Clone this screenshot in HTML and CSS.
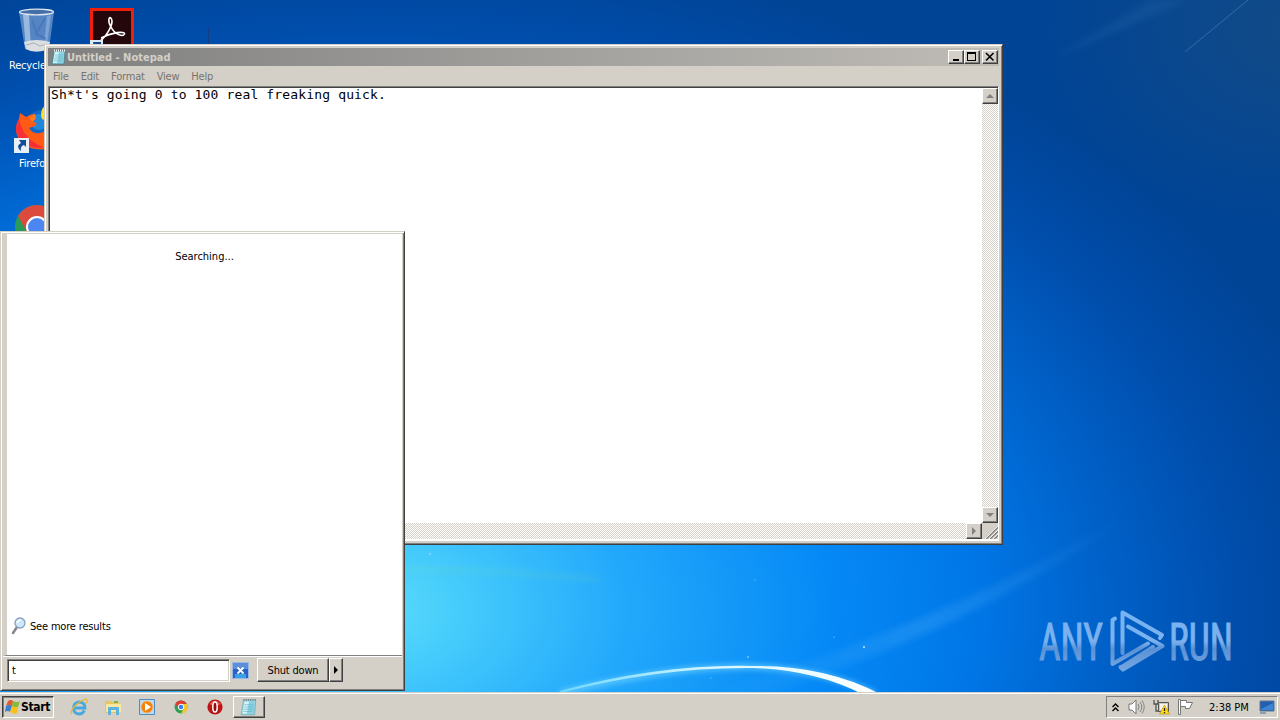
FILE: index.html
```html
<!DOCTYPE html>
<html lang="en">
<head>
    <meta charset="UTF-8">
    <meta name="viewport" content="width=device-width, initial-scale=1.0">
    <title>Desktop</title>
    <link rel="stylesheet" href="styles.css">
</head>
<body>
    <div class="desktop">
        <svg class="wallpaper" width="1280" height="692" viewBox="0 0 1280 692">
            <defs>
                <linearGradient id="beam" x1="0" y1="1" x2="1" y2="0">
                    <stop offset="0" stop-color="#6cc4ff" stop-opacity="0"/>
                    <stop offset=".45" stop-color="#6cc4ff" stop-opacity=".2"/>
                    <stop offset="1" stop-color="#6cc4ff" stop-opacity="0"/>
                </linearGradient>
                <linearGradient id="arc" x1="0" x2="1" y1="0" y2="0">
                    <stop offset="0" stop-color="#6fd8ff"/>
                    <stop offset=".5" stop-color="#d8f6ff"/>
                    <stop offset="1" stop-color="#fff"/>
                </linearGradient>
                <filter id="soft" x="-20%" y="-20%" width="140%" height="140%"><feGaussianBlur stdDeviation="3"/></filter>
                <filter id="glow" x="-20%" y="-50%" width="140%" height="200%"><feGaussianBlur stdDeviation="2.5"/></filter>
                <filter id="fine" x="-20%" y="-50%" width="140%" height="200%"><feGaussianBlur stdDeviation=".5"/></filter>
            </defs>
            <path d="M690 698 Q910 640 1140 508 Q960 640 740 700z" fill="url(#beam)" filter="url(#soft)"/>
            <path d="M1050 60 L1150 0 L1190 0z" fill="#4a90c8" opacity=".12" filter="url(#soft)"/>
            <path d="M1185 52 L1248 0" stroke="#7faed0" opacity=".35" filter="url(#fine)"/>
            <path d="M405 568 Q500 570 600 580" fill="none" stroke="#7be0a0" stroke-width="4" opacity=".2" filter="url(#soft)"/>
            <path d="M560 693 Q690 661 775 668 Q835 674 875 694" fill="none" stroke="#6fd0ff" stroke-width="7" opacity=".6" filter="url(#glow)"/>
            <path d="M560 693 Q660 667 752 668 Q815 670 862 694 L880 694 Q825 665 752 666 Q660 664 560 691z" fill="url(#arc)" filter="url(#fine)"/>
            <g fill="#b8ecff">
                <circle cx="430" cy="554" r=".8"/><circle cx="748" cy="657" r=".8"/><circle cx="864" cy="647" r="1"/>
                <circle cx="834" cy="637" r=".5"/><circle cx="755" cy="580" r=".5"/><circle cx="711" cy="678" r=".5"/>
            </g>
            <path d="M208.500 28 V44" stroke="#153c80"/>
        </svg>

        <div class="icon recycle">
            <svg width="40" height="50" viewBox="0 0 40 50">
                <path d="M2 6 L37 6 L32 43 Q19 49 8 43z" fill="#7399d0" opacity=".75"/>
                <path d="M6 9 L12 9 L14 43 L9 42z" fill="#d4e4f4" opacity=".55"/>
                <path d="M30 10 L34 9 L30 38 L27 38z" fill="#9dc2ea" opacity=".5"/>
                <path d="M15 14 L20 28 M28 12 L19 28 L29 33" stroke="#3a66ae" stroke-width="2" fill="none" opacity=".45"/>
                <path d="M7 36 Q19 32 33 36 L31 43 Q19 48 9 43z" fill="#dcdfe0"/>
                <path d="M9 39 L17 37 L23 40 L30 38" stroke="#a8b0b8" fill="none"/>
                <ellipse cx="19.500" cy="6" rx="17" ry="2.800" fill="#456fa8" stroke="#dce6ee" stroke-width="1.300"/>
            </svg>
            <span>Recycle Bin</span>
        </div>
        <div class="icon acrobat">
            <svg width="44" height="44" viewBox="0 0 44 44">
                <path d="M0 0H44V44H0z" fill="#f0200c"/>
                <path d="M3 3H41V44H3z" fill="#24070b"/>
                <path d="M10 33 C16 29 24 16 21.500 11 C19.500 7 17 12 21 19 C25 27 33 29 34.500 26 C35 23 22 24 11 30" fill="none" stroke="#fff" stroke-width="1.600"/>
                <path d="M-1 32H13V44H-1z" fill="#dce8f4"/>
                <path d="M3 34H11V40L8 37 4 41z" fill="#1c4a90"/>
            </svg>
        </div>
        <div class="icon firefox">
            <svg width="44" height="48" viewBox="0 0 44 48">
                <circle cx="27" cy="22" r="17" fill="#1268c8"/>
                <circle cx="24" cy="17" r="8" fill="#2088dc"/>
                <path d="M30 0 Q24 7 27 14 L44 22 V0z" fill="#f8e020"/>
                <path d="M5 8 L11 12 Q15 9 20 9 L21 13 L18 17 Q24 17 20 21 L14 23 Q19 31 28 27 L44 20 V43 Q5 50 1 26 Q1 18 4 14z" fill="#ff5a16"/>
                <path d="M4 14 Q7 30 20 38 L29 43 Q6 44 1 26 Q1 18 4 14z" fill="#f92f38"/>
                <path d="M14 12 L20 9 L21 13 L17 17z" fill="#ff7a20"/>
            </svg>
            <svg class="shortcut" width="15" height="15" viewBox="0 0 15 15">
                <path d="M0 0H15V15H0z" fill="#e8eff6"/>
                <path d="M5 2H12V9L10 7Q6 8 7 13Q1 8 7 5z" fill="#144c96"/>
            </svg>
            <span>Firefox</span>
        </div>
        <div class="icon chrome">
            <svg width="44" height="44" viewBox="0 0 44 44">
                <circle cx="22" cy="22" r="22" fill="#2a9a58"/>
                <path d="M3 11 A22 22 0 0 1 41 11 L22 22 L12 27z" fill="#dc4a3e"/>
                <circle cx="22" cy="22" r="10" fill="#4c86f0" stroke="#fff" stroke-width="2"/>
            </svg>
        </div>

        <svg class="watermark" width="210" height="66" viewBox="0 0 210 66">
            <defs>
                <linearGradient id="mark" x1="0" y1="0" x2="0" y2="66" gradientUnits="userSpaceOnUse">
                    <stop offset=".1" stop-color="#77b2f2"/>
                    <stop offset=".5" stop-color="#7cb2ee"/>
                    <stop offset=".62" stop-color="#5b92d6"/>
                    <stop offset="1" stop-color="#78a9e4"/>
                </linearGradient>
            </defs>
            <text x="3" y="52" textLength="64" lengthAdjust="spacingAndGlyphs">ANY</text>
            <text x="133" y="52" textLength="64" lengthAdjust="spacingAndGlyphs">RUN</text>
            <g fill="none" stroke="url(#mark)" stroke-width="4" stroke-linejoin="round" stroke-linecap="round">
                <path d="M79 10.500 L76.500 12 V56 L112 35.500"/>
                <path d="M86.500 45 V4.500 L126 27 L124 30"/>
                <path d="M92 18.500 L126.500 38 L87 61.500 L84.500 59"/>
                <path d="M85 59.500 L117 39"/>
            </g>
        </svg>

        <div class="window notepad">
            <div class="titlebar">
                <svg width="16" height="16" viewBox="0 0 16 16">
                    <path d="M3 2H14L13 15H1z" fill="#8cd3e2" stroke="#407c8c" stroke-width=".7"/>
                    <path d="M4 3H8L6 14H2z" fill="#d2f3f8"/>
                    <path d="M4 6H12M4 8H12M3 10H12M3 12H11" stroke="#63b1c5" stroke-width=".6"/>
                    <path d="M3 1.500H14" stroke="#f5f5f5" stroke-width="2" stroke-dasharray="1 1"/>
                </svg>
                <span class="title">Untitled - Notepad</span>
                <button class="btn"><svg width="12" height="10" viewBox="0 0 12 10"><path d="M3 7H9V9H3z"/></svg></button>
                <button class="btn"><svg width="12" height="10" viewBox="0 0 12 10"><path d="M1 0H10V9H1zM2 2V8H9V2z" fill-rule="evenodd"/></svg></button>
                <button class="btn close"><svg width="12" height="10" viewBox="0 0 12 10"><path d="M2 1L9.500 8.500M9.500 1L2 8.500" stroke="#000" stroke-width="1.600"/></svg></button>
            </div>
            <div class="menubar">
                <span>File</span><span>Edit</span><span>Format</span><span>View</span><span>Help</span>
            </div>
            <div class="editor">
                <div class="text">Sh*t's going 0 to 100 real freaking quick.</div>
                <div class="scroll vertical">
                    <button class="btn"><svg width="8" height="6" viewBox="0 0 8 6"><path d="M0 5L4 1 8 5z"/></svg></button>
                    <button class="btn"><svg width="8" height="6" viewBox="0 0 8 6"><path d="M0 1L4 5 8 1z"/></svg></button>
                </div>
                <div class="scroll horizontal">
                    <button class="btn"><svg width="6" height="8" viewBox="0 0 6 8"><path d="M1 0L5 4 1 8z"/></svg></button>
                </div>
                <div class="grip">
                    <svg width="17" height="17" viewBox="0 0 17 17">
                        <path d="M4 16L16 4M8 16L16 8M12 16L16 12" stroke="#808080" stroke-width="1.600"/>
                        <path d="M3 16L16 3M7 16L16 7M11 16L16 11" stroke="#fff" stroke-width=".8"/>
                    </svg>
                </div>
            </div>
        </div>

        <div class="startmenu">
            <div class="results">
                <div class="searching">Searching...</div>
                <div class="more">
                    <svg width="16" height="18" viewBox="0 0 16 18">
                        <path d="M6 10L2 16" stroke="#85858c" stroke-width="2.500" stroke-linecap="round"/>
                        <circle cx="9" cy="6" r="5" fill="#cde7fb" stroke="#8a9fba" stroke-width="1.300"/>
                        <path d="M6 6Q7 3 10 3" stroke="#fff" fill="none" stroke-width="1.500"/>
                    </svg>
                    <span>See more results</span>
                </div>
            </div>
            <div class="searchrow">
                <div class="searchbox">t</div>
                <svg class="clear" width="17" height="17" viewBox="0 0 17 17">
                    <path d="M.5.5H16.500V16.500H.5z" fill="#2a62c4" stroke="#9ab8e4"/>
                    <path d="M1 1H16V7H1z" fill="#5c8edc"/>
                    <path d="M3 12H14V16H3z" fill="#38a0e4"/>
                    <path d="M5.500 5.500L11.500 11.500M11.500 5.500L5.500 11.500" stroke="#fff" stroke-width="1.800"/>
                </svg>
                <button class="btn shutdown">Shut down</button>
                <button class="btn arrow"><svg width="5" height="8" viewBox="0 0 5 8"><path d="M0 0L4 4 0 8z"/></svg></button>
            </div>
        </div>
    </div>

    <div class="taskbar">
        <div class="start">
            <svg width="16" height="16" viewBox="0 0 16 16">
                <path d="M3 2Q6 0 8 2L7 7Q4 5 1 7z" fill="#e85826"/>
                <path d="M8 2Q12 4 15 2L13 8Q11 9 7 7z" fill="#84bc38"/>
                <path d="M1 7Q4 5 7 7L5 13Q3 11 0 13z" fill="#3a80d0"/>
                <path d="M7 7Q10 9 13 8L12 14Q9 16 5 13z" fill="#f8c018"/>
            </svg>
            <span>Start</span>
        </div>
        <div class="quick">
            <svg viewBox="0 0 18 18">
                <path d="M14.500 12.500Q12.500 16 9 16Q3.500 15.500 3.500 10Q4 4.500 9.500 4Q15 4.500 15 10H5" fill="none" stroke="#45a9df" stroke-width="2.800"/>
                <path d="M2 16Q-1 14 6 7Q15-1 17 2Q18 4 15 6" fill="none" stroke="#e7b738" stroke-width="1.300"/>
            </svg>
            <svg viewBox="0 0 18 18">
                <path d="M1 3H7L8 4H15V15H1z" fill="#e9c65f"/>
                <path d="M2 6H17V14H2z" fill="#f8e7a0"/>
                <path d="M4 17V10Q4 9 5 9H14Q15 9 15 10V17H12V12H7V17z" fill="#5cb3df"/>
                <path d="M10 3H14V5H10z" fill="#73b852"/>
            </svg>
            <svg viewBox="0 0 18 18">
                <path d="M1.500 1.500H16.500V16.500H1.500z" fill="#b8daf5" stroke="#4e8ac4"/>
                <circle cx="9" cy="9" r="6" fill="#f3820c" stroke="#ffc171" stroke-width=".7"/>
                <path d="M7 5L13 9 7 13z" fill="#fff"/>
            </svg>
            <svg viewBox="0 0 18 18">
                <circle cx="9" cy="9" r="6.500" fill="#30a154"/>
                <path d="M3.400 5.700A6.500 6.500 0 0 1 14.600 5.700L9 9 6 11z" fill="#df3c30"/>
                <path d="M9 6H14.800A6.500 6.500 0 0 1 9 15.500L12 10z" fill="#f6ca25"/>
                <circle cx="9" cy="9" r="2.800" fill="#3d7ded" stroke="#fff" stroke-width="1"/>
            </svg>
            <svg viewBox="0 0 18 18">
                <circle cx="9" cy="9" r="7.600" fill="#bc1415"/>
                <path d="M3 6Q9-1 15 6Q9 9 3 6z" fill="#e3554b"/>
                <ellipse cx="9" cy="9" rx="2.200" ry="5" fill="#99090c" stroke="#fff" stroke-width="1.500"/>
            </svg>
        </div>
        <button class="btn task">
            <svg width="18" height="18" viewBox="0 0 16 16">
                <path d="M3 2H14L13 15H1z" fill="#8cd3e2" stroke="#719aa4" stroke-width=".5"/>
                <path d="M4 3H8L6 14H2z" fill="#d2f3f8"/>
                <path d="M4 6H12M4 8H12M3 10H12M3 12H11" stroke="#63b1c5" stroke-width=".6"/>
                <path d="M3 1.500H14" stroke="#4d5a5c" stroke-dasharray="1 1"/>
            </svg>
        </button>
        <div class="tray">
            <svg class="chev" width="7" height="9" viewBox="0 0 7 9"><path d="M.5 4L3.500 1 6.500 4M.5 8L3.500 5 6.500 8" fill="none" stroke="#000" stroke-width="1.400"/></svg>
            <svg class="speaker" width="18" height="16" viewBox="0 0 18 16">
                <path d="M1 5H4L8 1V15L4 11H1z" fill="#fff" stroke="#777"/>
                <path d="M10 5Q12 8 10 11M12 3Q15.500 8 12 13M14 1.500Q18.500 8 14 14.500" fill="none" stroke="#858585"/>
            </svg>
            <svg class="network" width="17" height="16" viewBox="0 0 17 16">
                <path d="M5.500 3.500H15.500V12.500H5.500z" fill="#c8c8c0" stroke="#555"/>
                <path d="M7 5H14V11H7z" fill="#f4f4ec"/>
                <path d="M1 1V5H5V1M3 5V12H6" fill="none" stroke="#555" stroke-width="1.300"/>
                <path d="M11.500 6L16.500 15H6.500z" fill="#ffdb18" stroke="#bd8c00" stroke-width=".6"/>
                <path d="M11.500 9V12M11.500 13V14.300" stroke="#222" stroke-width="1.300"/>
            </svg>
            <svg class="flag" width="17" height="16" viewBox="0 0 17 16">
                <path d="M1.500.5H3.500V15.500H1.500z" fill="#fff" stroke="#777"/>
                <path d="M3.500 1.500H9.500V3.500H15.500L12.500 9.500H8.500V7.500H3.500z" fill="#fff" stroke="#777"/>
            </svg>
            <span class="clock">2:38 PM</span>
            <svg width="16" height="16" viewBox="0 0 16 16">
                <path d="M1 2H15V12H1z" fill="#235eb0" stroke="#5f7894"/>
                <path d="M2 10L14 4V11H2z" fill="#3b83d3"/>
                <path d="M1 14H7" stroke="#486c98"/>
            </svg>
        </div>
    </div>
</body>
</html>
```
FILE: styles.css
```css
* {
    box-sizing: border-box;
}
body {
    margin: 0;
    width: 1280px;
    height: 720px;
    overflow: hidden;
    display: flex;
    flex-direction: column;
    font-family: Tahoma, 'DejaVu Sans Condensed', 'DejaVu Sans', sans-serif;
    font-stretch: condensed;
    font-size: 11px;
    letter-spacing: -0.18px;
    color: #000;
}
svg {
    display: block;
    flex: none;
}
.desktop {
    position: relative;
    height: 692px;
    overflow: hidden;
    background:
        radial-gradient(ellipse 260px 200px at 1290px 30px, rgba(35, 80, 120, 0.5), transparent),
        radial-gradient(ellipse 1000px 667px at 370px 610px, #5cdcfc 0%, #48cefb 8%, #22a8fb 26%, #0589f6 46%, #0076e6 61%, #0062ca 73%, #004dab 87%, #004496 100%);
}
.wallpaper {
    position: absolute;
    left: 0;
    top: 0;
}

/* desktop icons */
.icon {
    position: absolute;
    color: #fff;
    white-space: nowrap;
}
.icon span {
    display: block;
}
.recycle {
    left: 17px;
    top: 6px;
}
.recycle span {
    margin: 3px 0 0 -8px;
}
.acrobat {
    left: 90px;
    top: 8px;
}
.firefox {
    left: 15px;
    top: 105px;
}
.firefox span {
    margin: 4px 0 0 4px;
}
.shortcut {
    position: absolute;
    left: -1px;
    top: 33px;
}
.chrome {
    left: 15px;
    top: 205px;
}
.watermark {
    position: absolute;
    left: 1036px;
    top: 608px;
    overflow: visible;
}
.watermark text {
    font-family: Roboto, sans-serif;
    font-size: 52px;
    letter-spacing: 0;
    fill: url(#mark);
    stroke: url(#mark);
    stroke-width: 1;
}

/* classic raised button */
.btn {
    display: flex;
    align-items: center;
    justify-content: center;
    padding: 0;
    background: #d4d0c8;
    border: 1px solid;
    border-color: #fff #404040 #404040 #fff;
    box-shadow: inset -1px -1px #808080;
    font: inherit;
    letter-spacing: inherit;
    color: #000;
}
.window {
    position: absolute;
    background: #d4d0c8;
    border: 1px solid;
    border-color: #d4d0c8 #404040 #404040 #d4d0c8;
    box-shadow: inset 1px 1px #fff, inset -1px -1px #808080;
    padding: 3px;
}
.notepad {
    left: 44px;
    top: 44px;
    width: 959px;
    height: 501px;
    display: flex;
    flex-direction: column;
}
.titlebar {
    display: flex;
    align-items: center;
    height: 18px;
    padding: 0 1px 0 3px;
    background: linear-gradient(90deg, #808080, #bfbcb6);
}
.title {
    flex: 1;
    color: #d4d0c8;
    font-weight: bold;
    letter-spacing: 0;
}
.titlebar .btn {
    width: 16px;
    height: 14px;
}
.titlebar .close {
    margin-left: 2px;
}
.menubar {
    display: flex;
    align-items: center;
    gap: 12px;
    height: 20px;
    padding-left: 5px;
    color: #77746f;
    letter-spacing: -0.2px;
}
.editor {
    flex: 1;
    display: grid;
    grid-template-columns: 1fr 16px;
    grid-template-rows: 1fr 16px;
    background: #fff;
    border: 1px solid;
    border-color: #808080 #fff #fff #808080;
    box-shadow: inset 1px 1px #404040;
    padding: 1px 0 1px 1px;
}
.text {
    padding-left: 1px;
    font-family: 'Lucida Console', 'DejaVu Sans Mono', monospace;
    font-stretch: normal;
    font-size: 13px;
    line-height: 14px;
    letter-spacing: 0.15px;
}
.scroll {
    display: flex;
    background: repeating-conic-gradient(#fff 0 25%, #d4d0c8 0 50%) 0 0 / 2px 2px;
}
.scroll .btn {
    width: 16px;
    height: 16px;
}
.scroll path {
    fill: #808080;
}
.vertical {
    flex-direction: column;
    justify-content: space-between;
}
.horizontal {
    justify-content: flex-end;
}
.grip {
    background: #d4d0c8;
    overflow: hidden;
}

.startmenu {
    position: absolute;
    left: 0;
    top: 231px;
    width: 405px;
    height: 460px;
    display: flex;
    flex-direction: column;
    background: #d4d0c8;
    border: 1px solid;
    border-color: #d4d0c8 #404040 #404040 #d4d0c8;
    box-shadow: inset 1px 1px #fff, inset -1px -1px #808080;
    padding: 2px;
}
.results {
    height: 422px;
    display: flex;
    flex-direction: column;
    justify-content: space-between;
    background: #fff;
    border-left: 4px solid #d4d0c8;
    border-bottom: 1px solid #808080;
    box-shadow: 0 1px #fff;
}
.searching {
    padding-top: 16px;
    text-align: center;
    letter-spacing: 0;
}
.more {
    display: flex;
    align-items: center;
    gap: 3px;
    padding: 0 0 20px 4px;
}
.searchrow {
    display: flex;
    align-items: center;
    padding: 2px 0 0 4px;
}
.searchbox {
    width: 223px;
    height: 23px;
    padding: 4px;
    line-height: 14px;
    background: #fff;
    border: 1px solid;
    border-color: #808080 #fff #fff #808080;
    box-shadow: inset 1px 1px #404040, inset -1px -1px #d4d0c8;
}
.clear {
    margin: 0 8px 0 2px;
}
.shutdown {
    width: 72px;
    height: 24px;
}
.arrow {
    width: 14px;
    height: 24px;
}

.taskbar {
    display: flex;
    align-items: center;
    height: 28px;
    padding: 1px 2px 0;
    background: #d4d0c8;
    border-top: 1px solid #d4d0c8;
    box-shadow: inset 0 1px #fff;
}
.start {
    display: flex;
    align-items: center;
    width: 52px;
    height: 22px;
    padding-left: 2px;
    border: 1px solid;
    border-color: #404040 #fff #fff #404040;
    box-shadow: inset 1px 1px #808080;
    font-weight: bold;
    font-size: 12px;
    letter-spacing: -0.35px;
}
.quick {
    display: flex;
    gap: 16px;
    padding-left: 16px;
}
.quick svg {
    width: 18px;
    height: 18px;
}
.task {
    width: 32px;
    height: 22px;
    margin-left: 9px;
}
.tray {
    display: flex;
    align-items: center;
    width: 172px;
    height: 22px;
    margin-left: auto;
    padding-left: 5px;
    border: 1px solid;
    border-color: #808080 #fff #fff #808080;
}
.speaker {
    margin-left: 9px;
}
.network {
    margin-left: 7px;
}
.flag {
    margin-left: 7px;
}
.clock {
    width: 50px;
    margin-left: 15px;
    white-space: nowrap;
    letter-spacing: 0;
}
```
